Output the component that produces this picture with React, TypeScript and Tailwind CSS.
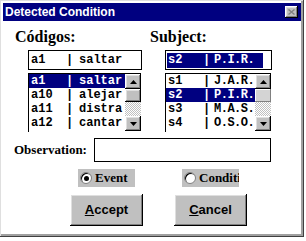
import { ReactNode } from 'react'

type Row = { code: string; name: string }

const codigos: Row[] = [
  { code: 'a1', name: 'saltar' },
  { code: 'a10', name: 'alejar' },
  { code: 'a11', name: 'distra' },
  { code: 'a12', name: 'cantar' },
]

const subjects: Row[] = [
  { code: 's1', name: 'J.A.R.' },
  { code: 's2', name: 'P.I.R.' },
  { code: 's3', name: 'M.A.S.' },
  { code: 's4', name: 'O.S.O.' },
]

// classic raised 3D edge
const raised =
  'bg-[#c0c0c0] shadow-[inset_-1px_-1px_#000,inset_1px_1px_#fff,inset_-2px_-2px_#808080,inset_2px_2px_#dfdfdf]'

function Arrow({ up }: { up?: boolean }) {
  return (
    <div className={`w-[16px] h-[15px] flex items-center justify-center ${raised}`}>
      <svg width="7" height="4" viewBox="0 0 7 4">
        {up ? <polygon points="3.5,0 7,4 0,4" fill="#000" /> : <polygon points="0,0 7,0 3.5,4" fill="#000" />}
      </svg>
    </div>
  )
}

function Scrollbar({ thumbLight }: { thumbLight?: boolean }) {
  return (
    <div className="w-[16px] flex flex-col shrink-0">
      <Arrow up />
      <div className={`h-[13px] w-[16px] ${thumbLight ? 'bg-[#d4d4d4] shadow-[inset_-1px_-1px_#808080,inset_1px_1px_#fff]' : raised}`} />
      <div className="h-[14px] bg-[repeating-conic-gradient(#c0c0c0_0_25%,#fff_0_50%)] bg-[length:2px_2px]" />
      <Arrow />
    </div>
  )
}

// one "code | name" line in the fixed font
function Cols({ row, codeW, barW, tight }: { row: Row; codeW: string; barW: string; tight?: boolean }) {
  return (
    <>
      <span className={`${codeW} shrink-0`}>{row.code}</span>
      <span className={`${barW} shrink-0`}>|</span>
      <span className={tight ? 'tracking-[-0.5px]' : ''}>{row.name}</span>
    </>
  )
}

function ListBox({ rows, sel, codeW, barW, tight, thumbLight, w }: { rows: Row[]; sel: number; codeW: string; barW: string; tight?: boolean; thumbLight?: boolean; w: string }) {
  return (
    <div className={`${w} h-[59px] border-l border-t border-black flex overflow-hidden font-['Liberation_Mono',monospace] font-bold text-[12px]`}>
      <div className="flex-1 overflow-hidden">
        {rows.map((r, i) => (
          <div
            key={r.code}
            className={`flex h-[14px] items-center whitespace-pre pl-[2px] ${i === sel ? 'bg-[#000080] text-white' : 'text-black'}`}
          >
            <Cols row={r} codeW={codeW} barW={barW} tight={tight} />
          </div>
        ))}
      </div>
      <Scrollbar thumbLight={thumbLight} />
    </div>
  )
}

function Radio({ label, checked }: { label: string; checked?: boolean }) {
  return (
    <div className="w-[57px] h-[18px] bg-[#c0c0c0] flex items-center pl-[2px] gap-[3px] overflow-hidden whitespace-nowrap">
      <div className="w-[12px] h-[12px] rounded-full bg-white border border-[#808080] shadow-[inset_1px_1px_#000] flex items-center justify-center shrink-0">
        {checked && <div className="w-[5px] h-[5px] rounded-full bg-black" />}
      </div>
      <span className="font-['Liberation_Serif',serif] font-bold text-[13px] text-black">{label}</span>
    </div>
  )
}

function Button({ children }: { children: ReactNode }) {
  return (
    <div className={`w-[73px] h-[32px] flex items-center justify-center font-['Liberation_Sans',sans-serif] font-bold text-[13px] text-black ${raised}`}>
      {children}
    </div>
  )
}

export default function App() {
  return (
    <div className="w-[306px] h-[241px] bg-white">
      <div className="w-[304px] h-[237px] p-[3px] bg-white shadow-[inset_-1px_-1px_#404040,inset_1px_1px_#dfdfdf,inset_-3px_-3px_#a0a0a0,inset_2px_2px_#fff] flex flex-col">
        {/* title bar */}
        <div className="h-[18px] bg-[#000080] flex items-center justify-between pl-[2px] pr-[3px]">
          <span className="font-['Liberation_Sans',sans-serif] font-bold text-[12px] text-white">Detected Condition</span>
          <div className={`w-[13px] h-[12px] flex items-center justify-center ${raised}`}>
            <svg width="7" height="6" viewBox="0 0 7 6">
              <path d="M0.5 0.5 L6.5 5.5 M6.5 0.5 L0.5 5.5" stroke="#808080" strokeWidth="1.4" />
            </svg>
          </div>
        </div>

        {/* columns */}
        <div className="flex mt-[3px]">
          <div className="w-[147px] pl-[12px]">
            <div className="h-[26px] font-['Liberation_Serif',serif] font-bold text-[16px] leading-[26px] text-black">Códigos:</div>
            <div className="ml-[13px] w-[114px] h-[20px] border border-black flex items-center font-['Liberation_Mono',monospace] font-bold text-[12px] whitespace-pre pl-[2px]">
              <Cols row={codigos[0]} codeW="w-[35px]" barW="w-[13px]" />
            </div>
            <div className="ml-[13px] mt-[3px]">
              <ListBox rows={codigos} sel={0} codeW="w-[35px]" barW="w-[13px]" w="w-[113px]" />
            </div>
          </div>
          <div className="w-[150px]">
            <div className="h-[26px] font-['Liberation_Serif',serif] font-bold text-[16px] leading-[26px] text-black">Subject:</div>
            <div className="ml-[15px] w-[107px] h-[20px] border border-black flex items-center pl-[1px]">
              <div className="w-[96px] h-[15px] bg-[#000080] text-white flex items-center font-['Liberation_Mono',monospace] font-bold text-[12px] whitespace-pre pl-[1px]">
                <Cols row={subjects[1]} codeW="w-[35px]" barW="w-[11px]" tight />
              </div>
            </div>
            <div className="ml-[15px] mt-[3px]">
              <ListBox rows={subjects} sel={1} codeW="w-[35px]" barW="w-[11px]" tight thumbLight w="w-[106px]" />
            </div>
          </div>
        </div>

        {/* observation */}
        <div className="flex items-center mt-[6px] pl-[11px]">
          <span className="w-[80px] font-['Liberation_Serif',serif] font-bold text-[13px] text-black">Observation:</span>
          <div className="w-[177px] h-[24px] border border-black bg-white" />
        </div>

        {/* radios */}
        <div className="flex mt-[7px] pl-[75px] gap-[47px]">
          <Radio label="Event" checked />
          <Radio label="Condition" />
        </div>

        {/* buttons */}
        <div className="flex mt-[7px] pl-[67px] gap-[31px]">
          <Button>
            <span><span className="underline">A</span>ccept</span>
          </Button>
          <Button>
            <span><span className="underline">C</span>ancel</span>
          </Button>
        </div>
      </div>
    </div>
  )
}
